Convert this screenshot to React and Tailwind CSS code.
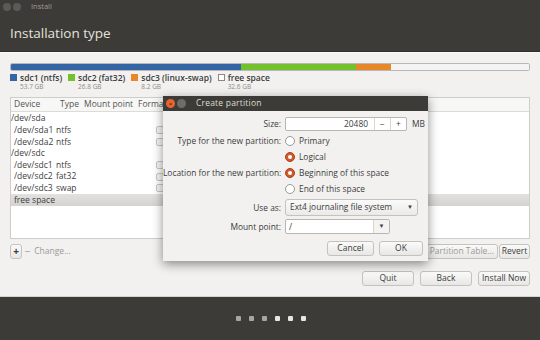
import React from 'react'

const rows = [
  { dev: '/dev/sda', indent: false },
  { dev: '/dev/sda1', type: 'ntfs', indent: true, check: true },
  { dev: '/dev/sda2', type: 'ntfs', indent: true, check: true },
  { dev: '/dev/sdc', indent: false },
  { dev: '/dev/sdc1', type: 'ntfs', indent: true, check: true },
  { dev: '/dev/sdc2', type: 'fat32', indent: true, check: true },
  { dev: '/dev/sdc3', type: 'swap', indent: true, check: true },
  { dev: 'free space', indent: true, selected: true },
]

const legend = [
  { name: 'sdc1 (ntfs)', size: '53.7 GB', color: 'bg-[#3465a4]' },
  { name: 'sdc2 (fat32)', size: '26.8 GB', color: 'bg-[#73c12d]' },
  { name: 'sdc3 (linux-swap)', size: '8.2 GB', color: 'bg-[#e8862a]' },
  { name: 'free space', size: '32.6 GB', color: 'bg-white border border-[#888]' },
]

function Radio({ on }) {
  return on ? (
    <span className="w-[10px] h-[10px] rounded-full bg-[#d05a2a] border border-[#a8401c] flex items-center justify-center">
      <span className="w-[4px] h-[4px] rounded-full bg-white" />
    </span>
  ) : (
    <span className="w-[10px] h-[10px] rounded-full bg-white border border-[#9a9a9a]" />
  )
}

function Btn({ children, className = '' }) {
  return (
    <div
      className={`h-[15px] flex items-center justify-center whitespace-nowrap overflow-hidden rounded-[3px] border border-[#c4c2bf] bg-gradient-to-b from-[#fafafa] to-[#e8e7e5] text-[8.5px] text-[#3c3c3c] ${className}`}
    >
      {children}
    </div>
  )
}

function Dialog() {
  return (
    <div className="absolute left-[163px] top-[96px] w-[265px] h-[165px] bg-[#f2f1f0] shadow-[0_3px_10px_rgba(0,0,0,0.45)] flex flex-col">
      <div className="h-[15px] bg-[#3c3b37] flex items-center px-[3px] gap-[2px]">
        <span className="w-[9px] h-[9px] rounded-full bg-[#e8642f] flex items-center justify-center text-[6px] leading-none text-[#5a2510] font-bold">×</span>
        <span className="w-[9px] h-[9px] rounded-full bg-[#6e6d69]" />
        <span className="ml-[8px] text-[8.5px] text-[#dfdbd2] tracking-[0.2px]">Create partition</span>
      </div>
      <div className="flex-1 text-[8.4px] text-[#3c3c3c] pt-[6px]">
        <div className="grid grid-cols-[118px_1fr] gap-x-[4px] items-center whitespace-nowrap">
          <div className="text-right h-[14px] leading-[14px]">Size:</div>
          <div className="flex items-center h-[14px]">
            <div className="w-[122px] h-[14px] flex border border-[#b8b6b2] rounded-[2px] bg-white">
              <div className="flex-1 text-right pr-[6px] leading-[12px]">20480</div>
              <div className="w-[16px] border-l border-[#d8d6d2] text-center leading-[12px]">−</div>
              <div className="w-[16px] border-l border-[#d8d6d2] text-center leading-[12px]">+</div>
            </div>
            <span className="ml-[5px]">MB</span>
          </div>

          <div className="text-right h-[16px] leading-[16px] mt-[2px]">Type for the new partition:</div>
          <div className="flex items-center gap-[4px] h-[16px] mt-[2px]"><Radio /><span>Primary</span></div>

          <div />
          <div className="flex items-center gap-[4px] h-[16px]"><Radio on /><span>Logical</span></div>

          <div className="text-right h-[16px] leading-[16px]">Location for the new partition:</div>
          <div className="flex items-center gap-[4px] h-[16px]"><Radio on /><span>Beginning of this space</span></div>

          <div />
          <div className="flex items-center gap-[4px] h-[16px]"><Radio /><span>End of this space</span></div>

          <div className="text-right h-[17px] leading-[17px] mt-[2px]">Use as:</div>
          <div className="mt-[2px]">
            <div className="w-[133px] h-[17px] flex items-center justify-between px-[4px] border border-[#c4c2bf] rounded-[3px] bg-gradient-to-b from-[#fafafa] to-[#ebeae8]">
              <span>Ext4 journaling file system</span>
              <span className="text-[6px]">▼</span>
            </div>
          </div>

          <div className="text-right h-[15px] leading-[15px] mt-[3px]">Mount point:</div>
          <div className="mt-[3px]">
            <div className="w-[105px] h-[15px] flex border border-[#b8b6b2] rounded-[2px] bg-white">
              <span className="flex-1 pl-[3px] leading-[13px]">/</span>
              <span className="w-[16px] border-l border-[#d8d6d2] bg-[#f4f3f2] text-[6px] flex items-center justify-center">▼</span>
            </div>
          </div>
        </div>
        <div className="flex justify-end gap-[5px] pr-[5px] mt-[7px]">
          <Btn className="w-[47px]">Cancel</Btn>
          <Btn className="w-[44px]">OK</Btn>
        </div>
      </div>
    </div>
  )
}

export default function App() {
  return (
    <div className="w-[540px] h-[340px] relative overflow-hidden flex flex-col bg-[#f2f1f0] font-['Open_Sans',sans-serif]">
      <div className="h-[13px] bg-[#3c3b37] flex items-center pl-[3px] gap-[2px]">
        <span className="w-[8px] h-[8px] rounded-full bg-[#5b5a56]" />
        <span className="w-[8px] h-[8px] rounded-full bg-[#5b5a56]" />
        <span className="ml-[8px] text-[7.5px] text-[#9d9b95]">Install</span>
      </div>
      <div className="h-[39px] bg-[#3c3b37] flex items-center pl-[10px] pt-[3px] border-b border-[#2d2c29]">
        <span className="text-[13.5px] text-[#e4e2de]">Installation type</span>
      </div>

      <div className="flex-1 flex flex-col px-[10px] border-t border-[#fbfbfa]">
        <div className="mt-[10px] h-[8px] flex rounded-[2px] overflow-hidden border border-[#b9b9b9]">
          <div className="w-[230px] bg-[#3465a4]" />
          <div className="w-[115px] bg-[#73c12d]" />
          <div className="w-[35px] bg-[#e8862a]" />
          <div className="flex-1 bg-[#f4f4f4]" />
        </div>
        <div className="mt-[2px] flex gap-[6px] text-[8.5px] leading-[10px]">
          {legend.map((l) => (
            <div key={l.name} className="flex gap-[3px]">
              <span className={`mt-[1px] w-[7px] h-[7px] ${l.color}`} />
              <div>
                <div className="font-semibold text-[#3c3c3c]">{l.name}</div>
                <div className="text-[6.5px] text-[#8a8a8a] leading-[8px]">{l.size}</div>
              </div>
            </div>
          ))}
        </div>

        <div className="mt-[6px] h-[142px] bg-white border border-[#cfcdca] text-[8.5px] text-[#3c3c3c] flex flex-col">
          <div className="h-[14px] flex items-center bg-[#f7f7f6] border-b border-[#dddbd8] text-[#555]">
            <span className="w-[48px] pl-[3px]">Device</span>
            <span className="w-[25px] pl-[1px]">Type</span>
            <span className="w-[54px]">Mount point</span>
            <span>Format?</span>
          </div>
          <div className="pt-[1px]">
            {rows.map((r) => (
              <div
                key={r.dev}
                className={`h-[11.6px] flex items-center ${r.selected ? 'bg-gradient-to-b from-[#e2e1df] to-[#d4d3d1]' : ''}`}
              >
                <span className={`${r.indent ? 'pl-[3px]' : ''} w-[45px] whitespace-nowrap`}>{r.dev}</span>
                <span className="w-[100px]">{r.type || ''}</span>
                {r.check && <span className="w-[8px] h-[8px] rounded-[2px] border border-[#c9c7c4] bg-[#f6f6f5]" />}
              </div>
            ))}
          </div>
        </div>

        <div className="mt-[5px] flex items-center">
          <div className="flex items-center">
            <Btn className="w-[12px] text-[10px] font-bold">+</Btn>
            <Btn className="w-[11px] text-[10px] border-transparent bg-none bg-transparent text-[#999]">−</Btn>
            <Btn className="w-[39px] border-transparent bg-none bg-transparent text-[#999]">Change…</Btn>
          </div>
          <div className="flex-1" />
          <Btn className="w-[98px] text-[#999] justify-end pr-[3px]">New Partition Table…</Btn>
          <Btn className="ml-[1px] w-[31px]">Revert</Btn>
        </div>

        <div className="mt-[12px] flex justify-end gap-[6px]">
          <Btn className="w-[52px]">Quit</Btn>
          <Btn className="w-[52px]">Back</Btn>
          <Btn className="w-[52px] border-[#9e9c98]">Install Now</Btn>
        </div>
      </div>

      <div className="h-[44px] bg-[#3c3b37] border-t border-[#d6d4d0] flex items-center justify-center gap-[8px] pl-[2px]">
        {[0, 1, 2, 3, 4, 5].map((i) => (
          <span key={i} className={`w-[5px] h-[5px] rounded-[1px] ${i < 3 ? 'bg-[#a8a6a1]' : 'bg-[#e8e6e2]'}`} />
        ))}
      </div>

      <Dialog />
    </div>
  )
}
